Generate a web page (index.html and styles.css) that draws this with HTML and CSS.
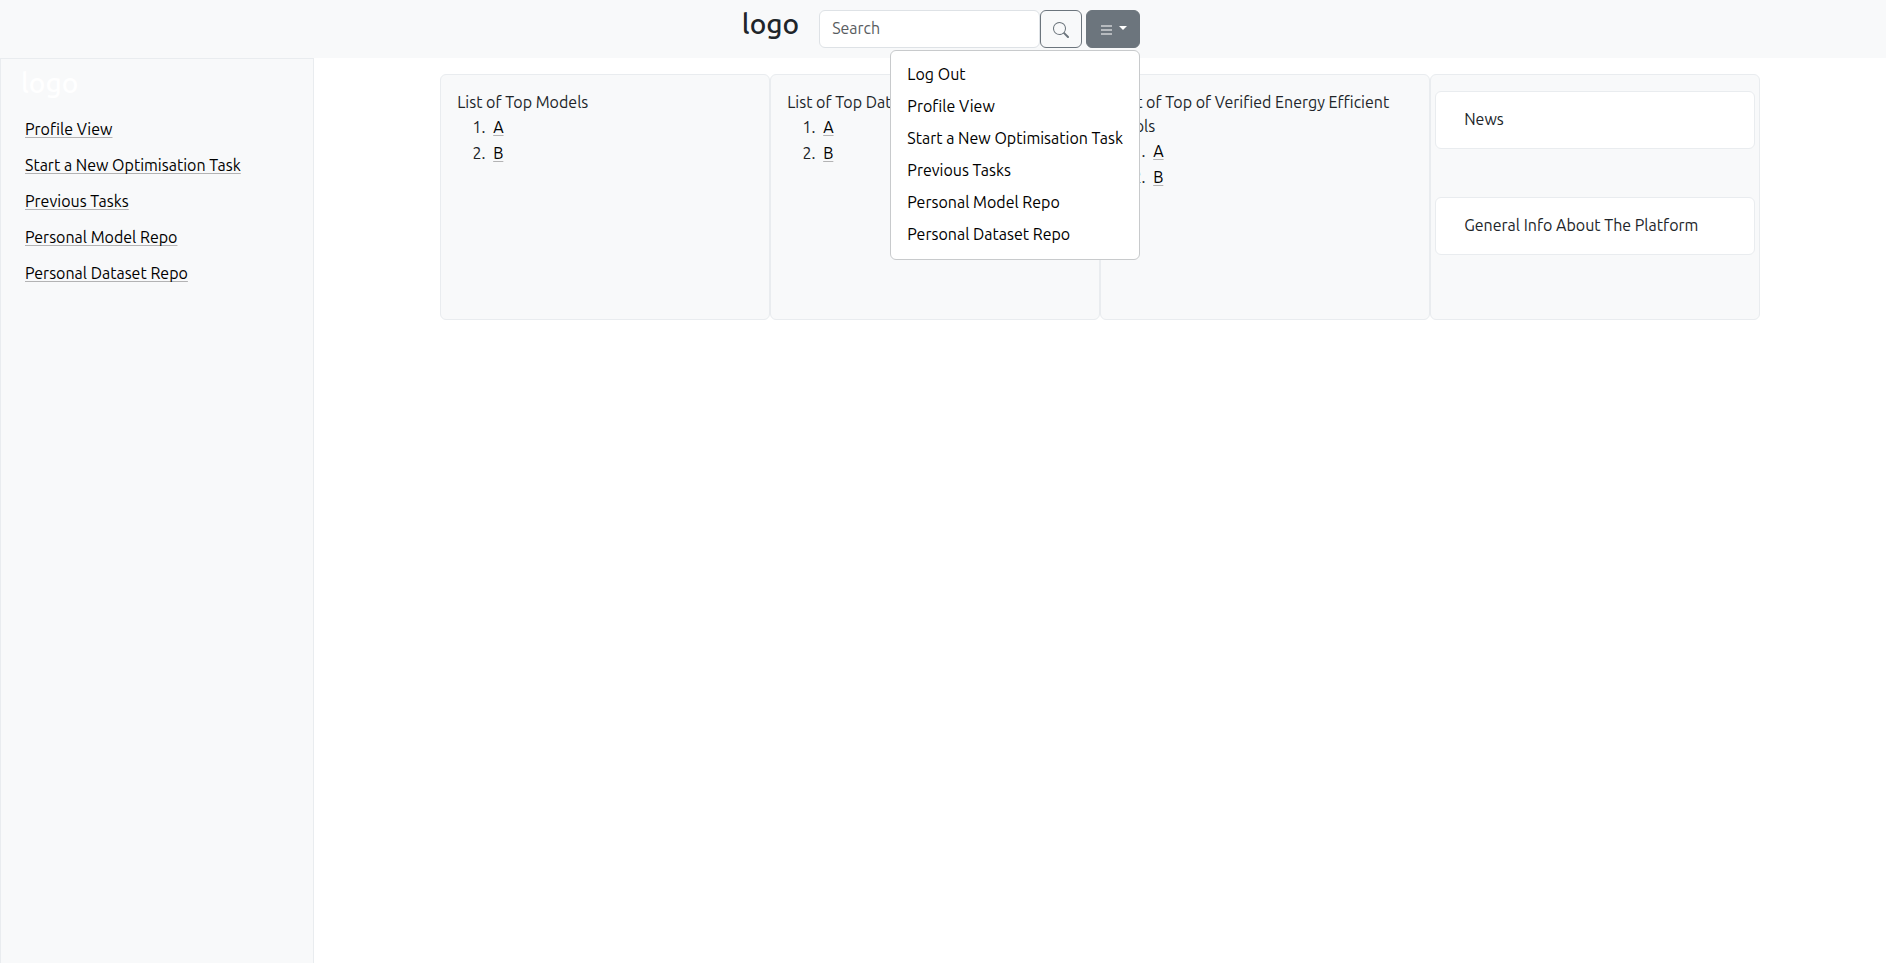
FILE: index.html
```
<!DOCTYPE html>
<html lang="en">
<head>
<meta charset="utf-8">
<title>Dashboard</title>
<link rel="stylesheet" href="styles.css">
</head>
<body>
<header class="navbar">
  <a class="brand" href="#">logo</a>
  <div class="tools">
    <form class="search">
      <input class="search-input" type="search" placeholder="Search" aria-label="Search">
      <button class="btn btn-outline" type="button" aria-label="Search">
        <svg class="icon" viewBox="0 0 16 16" fill="currentColor" aria-hidden="true"><path d="M11.742 10.344a6.5 6.5 0 1 0-1.397 1.398h-.001c.03.04.062.078.098.115l3.85 3.85a1 1 0 0 0 1.415-1.414l-3.85-3.85a1.007 1.007 0 0 0-.115-.1zM12 6.5a5.5 5.5 0 1 1-11 0 5.5 5.5 0 0 1 11 0z"/></svg>
      </button>
    </form>
    <div class="dropdown">
      <button class="btn btn-solid" type="button" aria-label="Menu" aria-expanded="true">
        <svg class="bars" viewBox="0 0 12 12" aria-hidden="true"><path d="M0 2h11M0 6h11M0 10h11" stroke="currentColor" stroke-width="2"/></svg>
        <span class="caret"></span>
      </button>
      <nav class="menu" aria-label="Account">
        <a class="menu-item" href="#">Log Out</a>
        <a class="menu-item" href="#">Profile View</a>
        <a class="menu-item" href="#">Start a New Optimisation Task</a>
        <a class="menu-item" href="#">Previous Tasks</a>
        <a class="menu-item" href="#">Personal Model Repo</a>
        <a class="menu-item" href="#">Personal Dataset Repo</a>
      </nav>
    </div>
  </div>
</header>
<div class="page">
  <aside class="sidebar">
    <a class="sidebar-brand" href="#">logo</a>
    <nav class="side-nav" aria-label="Sidebar">
      <a class="link" href="#">Profile View</a>
      <a class="link" href="#">Start a New Optimisation Task</a>
      <a class="link" href="#">Previous Tasks</a>
      <a class="link" href="#">Personal Model Repo</a>
      <a class="link" href="#">Personal Dataset Repo</a>
    </nav>
  </aside>
  <main class="main">
    <div class="cards">
      <section class="card">
        <div>List of Top Models</div>
        <ol class="list"><li><a class="link" href="#">A</a></li><li><a class="link" href="#">B</a></li></ol>
      </section>
      <section class="card">
        <div>List of Top Datasets</div>
        <ol class="list"><li><a class="link" href="#">A</a></li><li><a class="link" href="#">B</a></li></ol>
      </section>
      <section class="card">
        <div>List of Top of Verified Energy Efficient Tools</div>
        <ol class="list"><li><a class="link" href="#">A</a></li><li><a class="link" href="#">B</a></li></ol>
      </section>
      <section class="card card-stack">
        <div class="panel">News</div>
        <div class="panel">General Info About The Platform</div>
      </section>
    </div>
  </main>
</div>
</body>
</html>
```
FILE: styles.css
```
* { box-sizing: border-box; }

body {
  display: flex;
  flex-direction: column;
  min-height: 100vh;
  margin: 0;
  background: #fff;
  color: #212529;
  font-family: Ubuntu, "Noto Sans", sans-serif;
  font-size: 16px;
  line-height: 24px;
}

a { color: #000; text-decoration: none; }

.navbar {
  display: flex;
  justify-content: center;
  gap: 20px;
  padding: 10px 16px 10px 12px;
  background: #f8f9fa;
}

.brand, .sidebar-brand {
  color: #212529;
  font-size: 28px;
  font-weight: 500;
  line-height: 28px;
}

.tools, .search { display: flex; }
.tools { gap: 4px; }

.search-input {
  width: 221px;
  height: 38px;
  padding: 4px 12px 6px;
  border: 1px solid #dee2e6;
  border-radius: 6px;
  background: #fff;
  color: #212529;
  font: inherit;
}
.search-input::placeholder { color: #595c5f; opacity: 1; }

.btn {
  display: flex;
  align-items: center;
  height: 38px;
  padding: 0 12px;
  border: 1px solid #6c757d;
  border-radius: 6px;
}
.btn-outline { background: transparent; color: #6c757d; }
.btn-solid { gap: 6px; padding: 0 12px 0 14px; background: #6c757d; color: #fff; }
.icon { width: 16px; height: 16px; margin-top: 2px; }
.bars { width: 12px; height: 12px; margin-top: 2px; opacity: 0.5; }
.caret {
  margin-bottom: 2px;
  border: 4px solid transparent;
  border-top-color: #fff;
  border-bottom: 0;
}

.dropdown { position: relative; }
.menu {
  position: absolute;
  z-index: 10;
  top: 100%;
  right: 0;
  margin-top: 2px;
  padding: 7px 0 9px;
  border: 1px solid #c8cacc;
  border-radius: 6px;
  background: #fff;
}
.menu-item { display: block; padding: 4px 16px; white-space: nowrap; }

.page { display: flex; flex: 1; }

.sidebar {
  flex: 0 0 16.6667%;
  padding: 10px 20px;
  border: 1px solid #e9ecef;
  border-bottom: 0;
  background: #f8f9fa;
}
.sidebar-brand { display: block; color: #fff; }
.side-nav {
  display: flex;
  flex-direction: column;
  align-items: flex-start;
  gap: 12px;
  padding: 20px 4px;
}

.link {
  text-decoration: underline 1px rgba(0, 0, 0, 0.28);
  text-decoration-skip-ink: none;
  text-underline-offset: 2px;
}

.main { flex: 1; padding: 16px 0; }
.cards {
  display: grid;
  grid-template-columns: repeat(4, 1fr);
  max-width: 1320px;
  min-height: 246px;
  margin: 0 auto;
}
.card {
  padding: 15px 16px 17px;
  border: 1px solid #e9ecef;
  border-radius: 6px;
  background: #f8f9fa;
}
.list { margin: 0; padding-left: 32px; line-height: 26px; }
.list .link { margin-left: 4px; }
.card-stack {
  display: flex;
  flex-direction: column;
  gap: 48px;
  padding: 16px 4px;
}
.panel {
  padding: 15px 28px 17px;
  border: 1px solid #e9ecef;
  border-radius: 6px;
  background: #fff;
}
```
